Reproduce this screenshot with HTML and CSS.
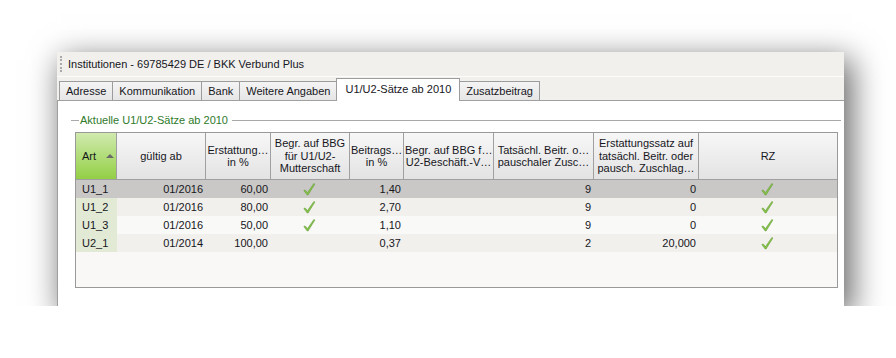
FILE: index.html
```html
<!DOCTYPE html>
<html lang="de">
<head>
    <meta charset="UTF-8">
    <title>Institutionen</title>
    <link rel="stylesheet" href="styles.css">
</head>
<body>
    <div class="window">
        <div class="titlebar">
            <span class="grip"></span>
            <span class="title">Institutionen - 69785429 DE / BKK Verbund Plus</span>
        </div>

        <div class="tabstrip">
            <div class="tab">Adresse</div>
            <div class="tab">Kommunikation</div>
            <div class="tab">Bank</div>
            <div class="tab">Weitere Angaben</div>
            <div class="tab active">U1/U2-Sätze ab 2010</div>
            <div class="tab">Zusatzbeitrag</div>
        </div>

        <div class="panel">
            <div class="group-head">
                <span class="group-line short"></span>
                <span class="group-title">Aktuelle U1/U2-Sätze ab 2010</span>
                <span class="group-line"></span>
            </div>

            <div class="grid-box">
                <table class="grid">
                    <colgroup>
                        <col class="c-art">
                        <col class="c-date">
                        <col class="c-pct">
                        <col class="c-bbg">
                        <col class="c-beitr">
                        <col class="c-bbg2">
                        <col class="c-tats">
                        <col class="c-satz">
                        <col>
                    </colgroup>
                    <thead>
                        <tr>
                            <th class="sorted">Art <span class="sort-arrow"></span></th>
                            <th>gültig ab</th>
                            <th>Erstattung…<br>in %</th>
                            <th>Begr. auf BBG<br>für U1/U2-<br>Mutterschaft</th>
                            <th>Beitrags…<br>in %</th>
                            <th>Begr. auf BBG f…<br>U2-Beschäft.-V…</th>
                            <th>Tatsächl. Beitr. o…<br>pauschaler Zusc…</th>
                            <th>Erstattungssatz auf<br>tatsächl. Beitr. oder<br>pausch. Zuschlag…</th>
                            <th class="last">RZ</th>
                        </tr>
                    </thead>
                    <tbody>
                        <tr class="selected">
                            <td class="art">U1_1</td>
                            <td class="num">01/2016</td>
                            <td class="num">60,00</td>
                            <td class="chk"><svg class="tick" viewBox="0 0 14 14"><path d="M1.8 8.6 L3.1 7.9 L5.5 10.6 L11.9 1.4 L12.9 2.1 L6.1 13 L5.2 13 Z"/></svg></td>
                            <td class="num">1,40</td>
                            <td></td>
                            <td class="num">9</td>
                            <td class="num">0</td>
                            <td class="chk"><svg class="tick" viewBox="0 0 14 14"><path d="M1.8 8.6 L3.1 7.9 L5.5 10.6 L11.9 1.4 L12.9 2.1 L6.1 13 L5.2 13 Z"/></svg></td>
                        </tr>
                        <tr>
                            <td class="art">U1_2</td>
                            <td class="num">01/2016</td>
                            <td class="num">80,00</td>
                            <td class="chk"><svg class="tick" viewBox="0 0 14 14"><path d="M1.8 8.6 L3.1 7.9 L5.5 10.6 L11.9 1.4 L12.9 2.1 L6.1 13 L5.2 13 Z"/></svg></td>
                            <td class="num">2,70</td>
                            <td></td>
                            <td class="num">9</td>
                            <td class="num">0</td>
                            <td class="chk"><svg class="tick" viewBox="0 0 14 14"><path d="M1.8 8.6 L3.1 7.9 L5.5 10.6 L11.9 1.4 L12.9 2.1 L6.1 13 L5.2 13 Z"/></svg></td>
                        </tr>
                        <tr class="alt">
                            <td class="art">U1_3</td>
                            <td class="num">01/2016</td>
                            <td class="num">50,00</td>
                            <td class="chk"><svg class="tick" viewBox="0 0 14 14"><path d="M1.8 8.6 L3.1 7.9 L5.5 10.6 L11.9 1.4 L12.9 2.1 L6.1 13 L5.2 13 Z"/></svg></td>
                            <td class="num">1,10</td>
                            <td></td>
                            <td class="num">9</td>
                            <td class="num">0</td>
                            <td class="chk"><svg class="tick" viewBox="0 0 14 14"><path d="M1.8 8.6 L3.1 7.9 L5.5 10.6 L11.9 1.4 L12.9 2.1 L6.1 13 L5.2 13 Z"/></svg></td>
                        </tr>
                        <tr>
                            <td class="art">U2_1</td>
                            <td class="num">01/2014</td>
                            <td class="num">100,00</td>
                            <td></td>
                            <td class="num">0,37</td>
                            <td></td>
                            <td class="num">2</td>
                            <td class="num">20,000</td>
                            <td class="chk"><svg class="tick" viewBox="0 0 14 14"><path d="M1.8 8.6 L3.1 7.9 L5.5 10.6 L11.9 1.4 L12.9 2.1 L6.1 13 L5.2 13 Z"/></svg></td>
                        </tr>
                    </tbody>
                </table>
            </div>
        </div>
    </div>
</body>
</html>
```

FILE: styles.css
```css
body {
    margin: 0;
    padding: 52px 0 0 57px;
    background-color: #fff;
    font-family: "Liberation Sans", Arial, sans-serif;
    font-size: 11px;
    color: #16161c;
}
.window {
    width: 787px;
    background-color: #f1f0ed;
    box-shadow: 6px 9px 30px 2px rgba(0,0,0,0.6);
}
.titlebar {
    height: 24px;
    display: flex;
    align-items: center;
    border-bottom: 1px solid #fcfcfb;
}
.grip {
    width: 0;
    height: 16px;
    margin: 0 6px 0 3px;
    border-left: 2px dotted #a9a9a9;
}
.title {
    font-size: 11px;
}
.tabstrip {
    height: 23px;
    display: flex;
    align-items: flex-end;
    padding-left: 2px;
    border-bottom: 1px solid #a0a0a0;
}
.tab {
    height: 19px;
    box-sizing: border-box;
    padding: 3px 6px 0;
    margin-right: -1px;
    border: 1px solid #9c9c9c;
    border-bottom: none;
    background: linear-gradient(#f4f4f4, #e6e6e6);
    white-space: nowrap;
}
.tab.active {
    height: 23px;
    margin-bottom: -1px;
    padding: 4px 8px 0;
    background: #fff;
    position: relative;
    z-index: 1;
}
.panel {
    height: 205px;
    background-color: #fff;
    border-left: 1px solid #a0a0a0;
    box-sizing: border-box;
    padding: 12px 3px 0 13px;
}
.group-head {
    height: 14px;
    display: flex;
    align-items: center;
}
.group-line {
    flex: 1;
    height: 1px;
    background-color: #a9a9a9;
    margin-left: 4px;
}
.group-line.short {
    flex: none;
    width: 8px;
    margin: 0 1px 0 0;
}
.group-title {
    color: #2e7a2a;
}
.grid-box {
    width: 763px;
    height: 156px;
    box-sizing: border-box;
    margin: 5px 0 0 4px;
    border: 1px solid #999;
    background-color: #f9f8f6;
}
.grid {
    width: 761px;
    table-layout: fixed;
    border-collapse: separate;
    border-spacing: 0;
}
.c-art { width: 41px; }
.c-date { width: 89px; }
.c-pct { width: 65px; }
.c-bbg { width: 79px; }
.c-beitr { width: 54px; }
.c-bbg2 { width: 90px; }
.c-tats { width: 100px; }
.c-satz { width: 105px; }
.grid th {
    height: 46px;
    padding: 0 1px;
    font-weight: normal;
    line-height: 12.5px;
    text-align: center;
    white-space: nowrap;
    overflow: hidden;
    background: linear-gradient(#f7f7f7, #e3e3e3);
    border-right: 1px solid #a0a0a0;
    border-bottom: 1px solid #a0a0a0;
}
.grid th.last {
    border-right: none;
}
.grid th.sorted {
    text-align: left;
    padding-left: 6px;
    background: linear-gradient(#d0eaae, #93cf45);
}
.sort-arrow {
    display: inline-block;
    margin-left: 7px;
    vertical-align: 2px;
    border-left: 4px solid transparent;
    border-right: 4px solid transparent;
    border-bottom: 4px solid #6a6a6a;
}
.grid td {
    height: 18px;
    padding: 0 3px 0 0;
    white-space: nowrap;
    background-color: #f1f0ed;
}
.grid tr.alt td {
    background-color: #f9f9f7;
}
.grid td.art {
    padding-left: 6px;
    background-color: #e2ead6;
}
.grid tr.alt td.art {
    background-color: #e2ead6;
}
.grid tr.selected td {
    background-color: #c9c8c6;
}
.num {
    text-align: right;
}
.chk {
    text-align: center;
}
.tick {
    width: 14px;
    height: 14px;
    vertical-align: middle;
    fill: #86c24c;
    stroke: #5a962a;
    stroke-width: 0.5;
}
```
